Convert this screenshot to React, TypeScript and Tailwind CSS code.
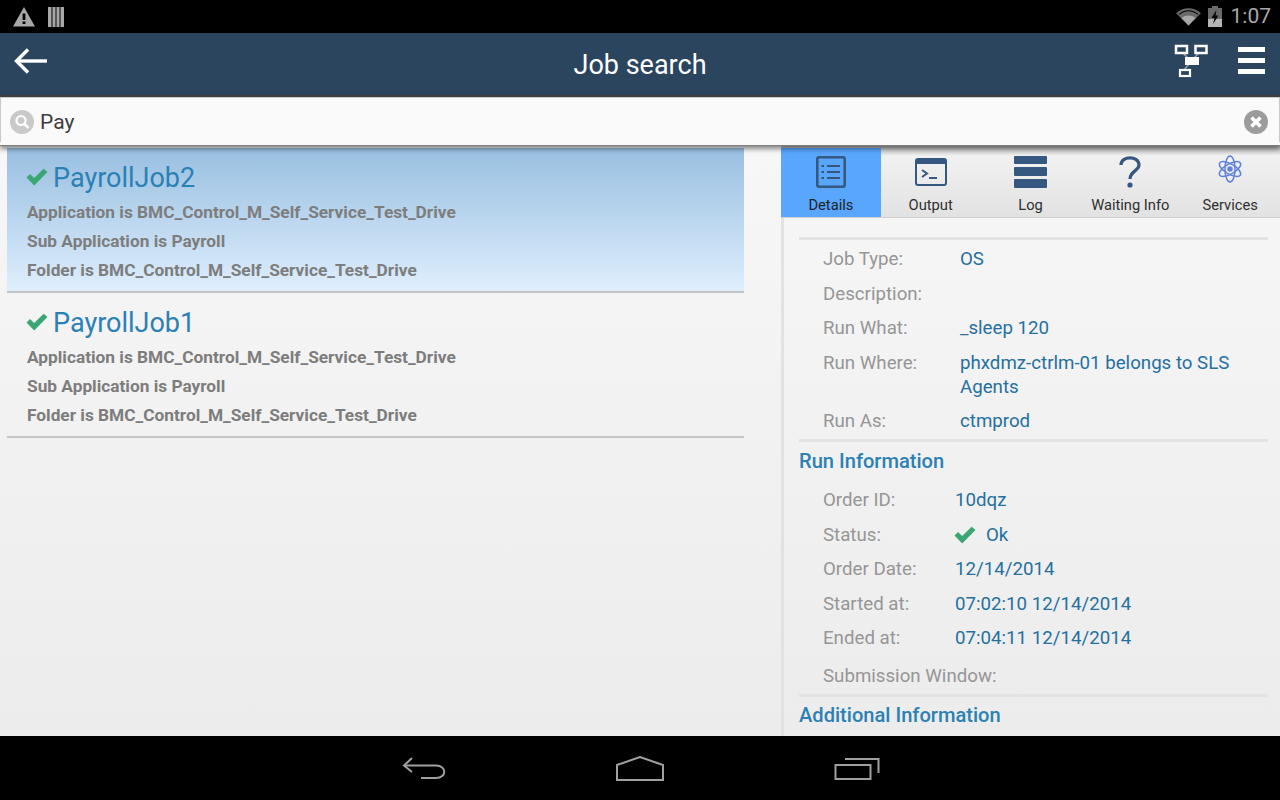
import { ReactNode } from "react";

function Check({ className }: { className: string }) {
  return (
    <svg viewBox="0 0 22 18" className={className}>
      <path d="M0.5 9.5 L4 6 L8.2 10 L17.6 0.8 L21.5 4 L8.2 17.5 Z" fill="#3aa673" />
    </svg>
  );
}

function JobItem({ name, selected }: { name: string; selected?: boolean }) {
  return (
    <div
      className={
        "h-[145px] border-b-2 border-[#c3c6c8] pl-5 pt-[10px] " +
        (selected ? "bg-gradient-to-b from-[#98bfe0] to-[#dfeefd]" : "")
      }
    >
      <div className="flex items-center h-[40px]">
        <Check className="w-[22px] h-[18px] mr-[5px] -mt-[3px] -ml-[1px]" />
        <span className="text-[27px] text-[#2b80b4] leading-none">{name}</span>
      </div>
      <div className="text-[17.3px] font-bold text-[#7d7d7d] leading-[29px]">
        <div>Application is BMC_Control_M_Self_Service_Test_Drive</div>
        <div>Sub Application is Payroll</div>
        <div>Folder is BMC_Control_M_Self_Service_Test_Drive</div>
      </div>
    </div>
  );
}

function Tab({ label, icon, active }: { label: string; icon: ReactNode; active?: boolean }) {
  return (
    <div
      className={
        "relative w-[100px] h-[69px] flex flex-col items-center pt-[7px] " +
        (active ? "bg-[#59a6ff] text-[#1b1f24]" : "text-[#2f2f2f]")
      }
    >
      <div className="h-[33px] flex items-center justify-center">{icon}</div>
      <div className="text-[14.7px] leading-none mt-[10px] whitespace-nowrap">{label}</div>
    </div>
  );
}

function Row({
  label,
  children,
  h,
  valueLeft = "w-[137px]",
}: {
  label: string;
  children?: ReactNode;
  h: string;
  valueLeft?: string;
}) {
  return (
    <div className={"flex pl-6 text-[18.7px] leading-[24px] " + h}>
      <div className={"text-[#969696] shrink-0 whitespace-nowrap " + valueLeft}>{label}</div>
      <div className="text-[#25709f]">{children}</div>
    </div>
  );
}

const rule = "h-[3px] bg-[#e3e3e3]";

export default function App() {
  return (
    <div className="relative w-[1280px] h-[800px] overflow-hidden bg-black font-['Roboto',sans-serif]">
      {/* status bar */}
      <div className="h-[33px] bg-black flex items-center pl-[13px] pr-[9px] text-[#a8a8a8]">
        <svg viewBox="0 0 22 20" className="w-[22px] h-[20px]">
          <path fillRule="evenodd" d="M11 0 L22 19.5 H0 Z M9.6 6.5 V13 H12.4 V6.5 Z M9.6 14.5 V17 H12.4 V14.5 Z" fill="#a8a8a8" />
        </svg>
        <svg viewBox="0 0 16 20" className="w-[16px] h-[20px] ml-[13px]">
          <path d="M0 0H3.5V20H0ZM4.5 0H7.5V20H4.5ZM8.5 0H11.5V20H8.5ZM12.5 0H16V20H12.5Z" fill="#a8a8a8" />
        </svg>
        <div className="ml-auto flex items-center">
          <svg viewBox="0 0 26 20" className="w-[25px] h-[19px]">
            <path d="M0 6.5 C7 -0.5 19 -0.5 26 6.5 L13 19.5 Z" fill="#6a6a6a" />
            <path d="M5.5 11.5 C9.5 8 16.5 8 20.5 11.5 L13 19.5 Z" fill="#a8a8a8" />
            <path d="M3 7.8 C9 2.6 17 2.6 23 7.8" stroke="#000" strokeWidth="1.2" fill="none" />
          </svg>
          <svg viewBox="0 0 14 21" className="w-[14px] h-[21px] ml-[7px]">
            <path d="M4 0H10V2H14V21H0V2H4Z" fill="#6a6a6a" />
            <path d="M0 13H14V21H0Z" fill="#b5b5b5" />
            <path d="M8.5 4 L3.5 12 H6.5 L5 18 L10.5 9.5 H7.5 Z" fill="#000" />
          </svg>
          <span className="ml-[9px] text-[21px] leading-none text-[#a8a8a8]">1:07</span>
        </div>
      </div>

      {/* app bar */}
      <div className="relative h-[62px] bg-[#2c455f] flex items-center justify-center">
        <svg viewBox="0 0 34 26" className="absolute left-[14px] top-[15px] w-[34px] h-[26px]" fill="none" stroke="#fff" strokeWidth="3.4">
          <path d="M33 13H3" />
          <path d="M14 1.5 L2.5 13 L14 24.5" />
        </svg>
        <span className="text-[27px] text-white leading-none mt-[3px]">Job search</span>
        <svg viewBox="0 0 34 34" className="absolute left-[1174px] top-[11px] w-[34px] h-[34px]" fill="none">
          <path d="M8 8 L17 17 M26 8 L17 17 M15 20 L10 26" stroke="#8da0b4" strokeWidth="1.5" />
          <rect x="2" y="2" width="11" height="7" stroke="#fff" strokeWidth="2.5" fill="#2c455f" />
          <rect x="21.5" y="2" width="11" height="7" stroke="#fff" strokeWidth="2.5" fill="#2c455f" />
          <rect x="11" y="13" width="14" height="8" fill="#fff" />
          <rect x="6" y="26" width="10" height="6" stroke="#fff" strokeWidth="2.2" fill="#2c455f" />
        </svg>
        <div className="absolute left-[1238px] top-[14px] w-[27px] flex flex-col gap-[6px]">
          <div className="h-[5px] bg-white" />
          <div className="h-[5px] bg-white" />
          <div className="h-[5px] bg-white" />
        </div>
      </div>

      {/* search bar */}
      <div className="relative z-10 h-[51px] bg-[#fafafa] border-t-2 border-t-[#3f3f3f] border-b border-b-[#7d7d7d] shadow-[0_3px_5px_rgba(0,0,0,0.45)] pt-[3px]">
        <div className="h-full border-t border-t-[#c9c9c9] -mt-[3px] pt-[2px] flex items-center pl-[9px] pr-[11px] border-x border-x-[#c9c9c9]">
          <svg viewBox="0 0 24 24" className="w-[24px] h-[24px] mt-[2px]">
            <circle cx="12" cy="12" r="12" fill="#c9c9c9" />
            <circle cx="11" cy="10.5" r="4.5" fill="none" stroke="#fff" strokeWidth="2.2" />
            <path d="M14.5 14 L18.5 18" stroke="#fff" strokeWidth="2.6" />
          </svg>
          <span className="ml-[6px] mt-[3px] text-[21px] text-[#3d3d3d] leading-none">Pay</span>
          <svg viewBox="0 0 24 24" className="ml-auto w-[24px] h-[24px] mt-[2px]">
            <circle cx="12" cy="12" r="12" fill="#9c9c9c" />
            <path d="M7.5 7.5 L16.5 16.5 M16.5 7.5 L7.5 16.5" stroke="#fff" strokeWidth="3.6" />
          </svg>
        </div>
      </div>

      {/* content */}
      <div className="flex h-[590px] bg-gradient-to-b from-[#f7f7f7] to-[#ececec]">
        <div className="w-[781px] shrink-0 pl-[7px] pr-[37px] pt-[2px]">
          <JobItem name="PayrollJob2" selected />
          <JobItem name="PayrollJob1" />
        </div>

        <div className="flex-1 overflow-hidden">
          <div className="h-[72px] pt-[2px] flex border-b border-[#cfcfcf] bg-gradient-to-b from-[#f4f4f4] to-[#e2e2e2] relative">
            <div className="absolute left-0 right-0 top-0 h-[10px] bg-gradient-to-b from-[#8a8a8a]/60 to-transparent" />
            <Tab
              active
              label="Details"
              icon={
                <svg viewBox="0 0 30 32" className="w-[30px] h-[32px]" fill="none" stroke="#34587f">
                  <rect x="1.3" y="1.3" width="27.4" height="29.4" rx="2" strokeWidth="2.6" />
                  <path d="M11 10H24M11 16H24M11 22H24" strokeWidth="2.2" />
                  <path d="M5.5 10H8M5.5 16H8M5.5 22H8" strokeWidth="2.2" />
                </svg>
              }
            />
            <Tab
              label="Output"
              icon={
                <svg viewBox="0 0 32 28" className="w-[32px] h-[28px]" fill="none">
                  <rect x="1" y="1" width="30" height="26" rx="2" stroke="#34587f" strokeWidth="2" />
                  <rect x="1" y="1" width="30" height="5" fill="#34587f" />
                  <path d="M7 12 L12 15.5 L7 19" stroke="#34587f" strokeWidth="2" />
                  <path d="M14 20H22" stroke="#34587f" strokeWidth="2" />
                </svg>
              }
            />
            <Tab
              label="Log"
              icon={
                <div className="w-[33px] flex flex-col gap-[3px]">
                  <div className="h-[8px] bg-[#34587f] rounded-[1px]" />
                  <div className="h-[9px] bg-[#34587f] rounded-[1px]" />
                  <div className="h-[9px] bg-[#34587f] rounded-[1px]" />
                </div>
              }
            />
            <Tab
              label="Waiting Info"
              icon={
                <svg viewBox="0 0 22 32" className="w-[22px] h-[32px]" fill="none">
                  <path d="M2 9 C2 -0.5 20 -0.5 20 9 C20 15 11 15 11 23" stroke="#34587f" strokeWidth="3.2" />
                  <circle cx="11" cy="29" r="2.6" fill="#34587f" />
                </svg>
              }
            />
            <Tab
              label="Services"
              icon={
                <svg viewBox="0 0 26 28" className="w-[26px] h-[28px] -mt-[5px]" fill="none" stroke="#5f82d8" strokeWidth="1.5">
                  <ellipse cx="13" cy="14" rx="12" ry="5" transform="rotate(30 13 14)" />
                  <ellipse cx="13" cy="14" rx="12" ry="5" transform="rotate(-30 13 14)" />
                  <ellipse cx="13" cy="14" rx="5" ry="13" />
                  <circle cx="13" cy="14" r="2" fill="#5f82d8" />
                </svg>
              }
            />
          </div>

          <div className="h-full border-l-[3px] border-l-[#e2e2e2] pl-[15px] pr-[12px] pt-[19px]">
            <div className={rule} />
            <div className="pt-[7px]">
              <Row label="Job Type:" h="h-[35px]">OS</Row>
              <Row label="Description:" h="h-[34px]" />
              <Row label="Run What:" h="h-[35px]">_sleep 120</Row>
              <Row label="Run Where:" h="h-[58px]">phxdmz-ctrlm-01 belongs to SLS<br />Agents</Row>
              <Row label="Run As:" h="h-[30px]">ctmprod</Row>
            </div>
            <div className={rule} />
            <div className="text-[20.1px] font-medium text-[#2b80b4] leading-[24px] pt-[7px]">Run Information</div>
            <div className="pt-[15px]">
              <Row label="Order ID:" valueLeft="w-[132px]" h="h-[35px]">10dqz</Row>
              <Row label="Status:" valueLeft="w-[132px]" h="h-[34px]">
                <span className="flex items-center">
                  <Check className="w-[22px] h-[18px] mr-[10px] -ml-[1px]" />
                  Ok
                </span>
              </Row>
              <Row label="Order Date:" valueLeft="w-[132px]" h="h-[35px]">12/14/2014</Row>
              <Row label="Started at:" valueLeft="w-[132px]" h="h-[34px]">07:02:10 12/14/2014</Row>
              <Row label="Ended at:" valueLeft="w-[132px]" h="h-[38px]">07:04:11 12/14/2014</Row>
              <Row label="Submission Window:" h="h-[30px]" />
            </div>
            <div className={rule} />
            <div className="text-[20.1px] font-medium text-[#2b80b4] leading-[24px] pt-[6px]">Additional Information</div>
          </div>
        </div>
      </div>

      {/* nav bar */}
      <div className="h-[64px] bg-black flex items-center justify-center relative">
        <svg viewBox="0 0 44 24" className="absolute left-[402px] top-[20px] w-[44px] h-[24px]" fill="none" stroke="#a0a0a0" strokeWidth="2">
          <path d="M10 2 L2 9.5 L10 16" />
          <path d="M2 9.5 H34 C45 9.5 45 22 34 22 H19" />
        </svg>
        <svg viewBox="0 0 48 25" className="absolute left-[616px] top-[20px] w-[48px] h-[25px]" fill="none" stroke="#a0a0a0" strokeWidth="2">
          <path d="M1 9 L24 1 L47 9 V24 H1 Z" />
        </svg>
        <svg viewBox="0 0 46 24" className="absolute left-[834px] top-[21px] w-[46px] h-[24px]" fill="none" stroke="#a0a0a0" strokeWidth="2">
          <rect x="1.5" y="8" width="35" height="14" />
          <path d="M11 2 H44.5 V16" />
        </svg>
      </div>
    </div>
  );
}
